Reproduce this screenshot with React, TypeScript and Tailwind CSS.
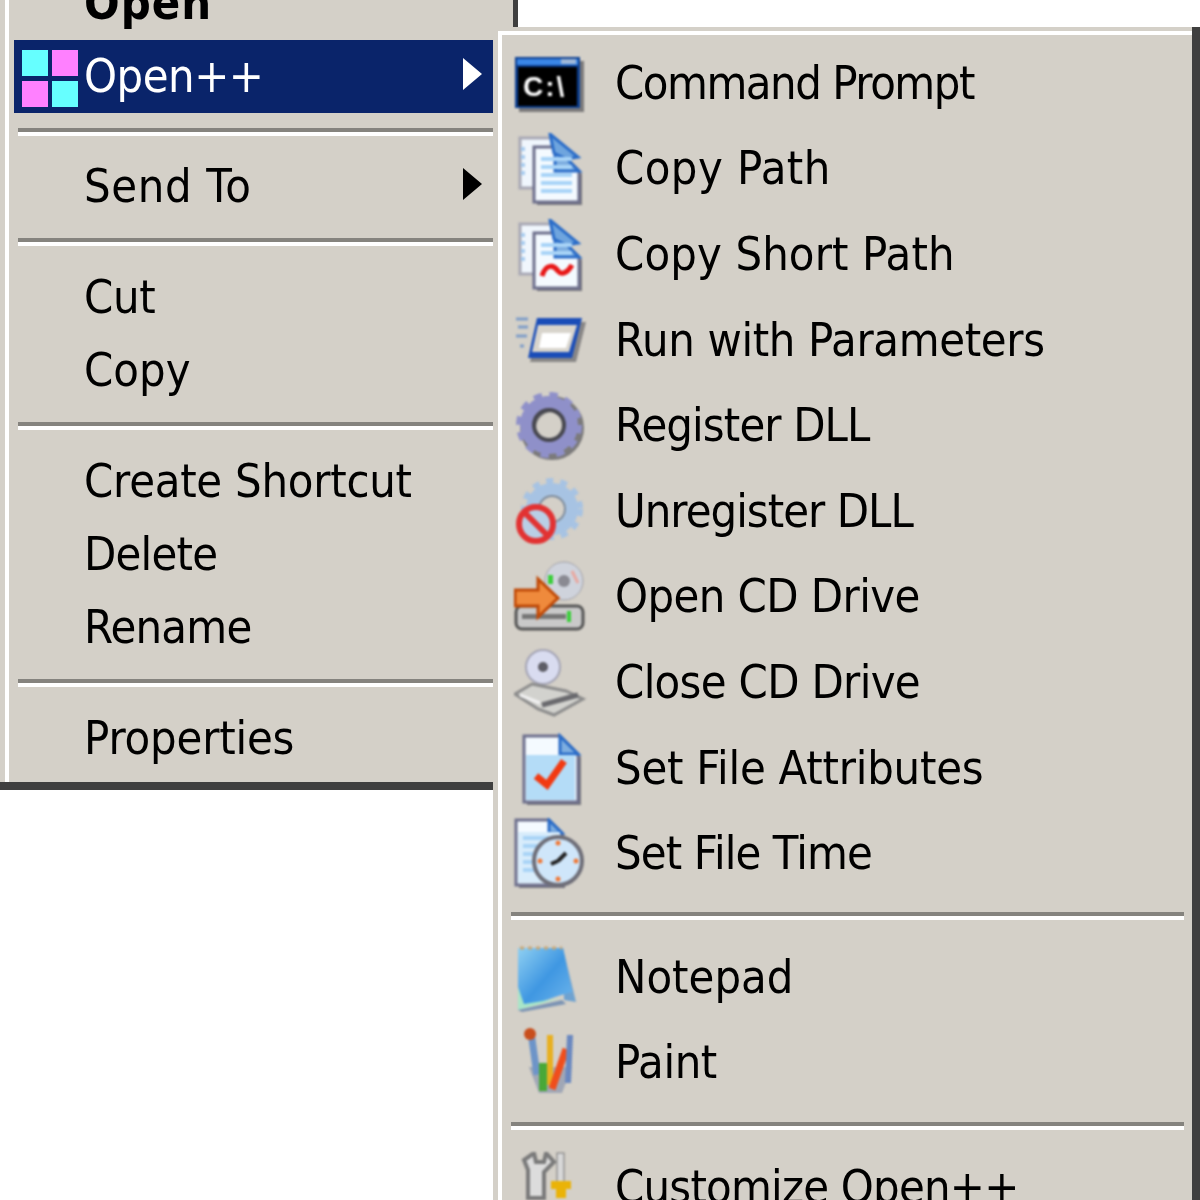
import React from 'react';

// Classic Windows 2000 shell context menu, blown up to about 4x
const GREY = 'bg-[#d4d0c8]';
const TEXT = 'inline-block scale-y-[1.1] blur-[0.7px] whitespace-nowrap';

const Arrow: React.FC<{ color: string }> = ({ color }) => (
  <svg width="19" height="32" viewBox="0 0 19 32" className="ml-auto mr-[11px] mb-[6px] blur-[0.7px]">
    <path d="M0 0L19 16L0 32Z" fill={color} />
  </svg>
);

const Sep: React.FC<{ h: string; cls: string }> = ({ h, cls }) => (
  <div className={`${h} ${cls} flex flex-col justify-center`}>
    <div className="h-[4px] bg-[#85837e] blur-[0.5px]" />
    <div className="h-[4px] bg-white blur-[0.5px]" />
  </div>
);

const LeftRow: React.FC<{ label: string; track: string; arrow?: boolean }> = ({ label, track, arrow }) => (
  <div className="h-[73px] flex items-center pl-[70px]">
    <span className={`${TEXT} ${track} text-black`}>{label}</span>
    {arrow && <Arrow color="#000" />}
  </div>
);

const DocShape: React.FC<{ x: number; y: number; w: number; h: number; fold?: number }> = ({ x, y, w, h, fold = 22 }) => (
  <g>
    <path d={`M${x + 3} ${y + 3}h${w - fold}l${fold} ${fold}v${h - fold}h${-w}z`} fill="#5a5a66" opacity="0.75" />
    <path d={`M${x} ${y}h${w - fold}l${fold} ${fold}v${h - fold}h${-w}z`} fill="#f4faff" stroke="#6d6f8c" strokeWidth="3" />
    <path d={`M${x + w - fold} ${y}l${fold} ${fold}h${-fold}z`} fill="#7eaee0" stroke="#2a6cc8" strokeWidth="3" />
  </g>
);

const Lines: React.FC<{ x: number; y: number; w: number; n: number }> = ({ x, y, w, n }) => (
  <g fill="#a9d4f7">
    {Array.from({ length: n }).map((_, i) => (
      <rect key={i} x={x} y={y + i * 8} width={w} height={4} />
    ))}
  </g>
);

const CmdIcon = () => (
  <>
    <rect x="5" y="13" width="65" height="51" fill="#55555a" opacity="0.7" />
    <rect x="1" y="9" width="65" height="51" fill="#0c3f90" />
    <rect x="3" y="11" width="61" height="6" fill="#3a86e6" />
    <rect x="47" y="11" width="15" height="5" fill="#9fb8d8" />
    <rect x="4" y="19" width="59" height="39" fill="#000" />
    <text x="9" y="48" fill="#fff" fontSize="28" fontWeight="700" letterSpacing="2" fontFamily="'Liberation Sans', sans-serif">C:\</text>
  </>
);

const CopyIcon: React.FC<{ squiggle?: boolean }> = ({ squiggle }) => (
  <>
    <rect x="6" y="5" width="32" height="50" fill="#f0f6fd" stroke="#a8a8b4" strokeWidth="3" />
    <path d="M9 14v32" stroke="#a9cdf0" strokeWidth="4" strokeDasharray="4 4" />
    <DocShape x={20} y={14} w={45} h={55} fold={24} />
    <path d="M36 1L64 24L52 26L40 20Z" fill="#6fa5de" stroke="#2a6cc8" strokeWidth="3" />
    <Lines x={27} y={24} w={31} n={squiggle ? 2 : 5} />
    {squiggle && (
      <path d="M28 57C32 44 40 46 44 52C48 57 54 53 58 46" fill="none" stroke="#e81818" strokeWidth="5" />
    )}
  </>
);

const RunIcon = () => (
  <>
    <path d="M26 17H72L62 57H16Z" fill="#55555a" opacity="0.6" />
    <path d="M23 13H68L58 53H14Z" fill="#1a4db8" />
    <path d="M24 20H63L55 47H18Z" fill="#d8d4cc" />
    <path d="M28 28H57L52 43H25Z" fill="#fff" />
    <path d="M2 14h12M4 22h10M2 31h11M6 41h4" stroke="#7f9dc8" strokeWidth="3" />
  </>
);

const GearIcon = () => (
  <>
    <circle cx="38" cy="38" r="24" fill="none" stroke="#55555a" strokeWidth="16" opacity="0.7" />
    <circle cx="35" cy="35" r="29" fill="none" stroke="#8f90c9" strokeWidth="8" strokeDasharray="8 7.2" />
    <circle cx="35" cy="35" r="22" fill="none" stroke="#8f90c9" strokeWidth="14" />
    <circle cx="35" cy="35" r="15" fill="none" stroke="#47474f" strokeWidth="4" />
  </>
);

const UnregIcon = () => (
  <>
    <circle cx="38" cy="33" r="28" fill="none" stroke="#a7c3e3" strokeWidth="6" strokeDasharray="7 7" />
    <circle cx="38" cy="33" r="20" fill="none" stroke="#a7c3e3" strokeWidth="12" />
    <circle cx="38" cy="33" r="13" fill="none" stroke="#7d8c9e" strokeWidth="2" />
    <circle cx="22" cy="48" r="17" fill="#b9cfe6" stroke="#e23232" strokeWidth="6" />
    <path d="M11 37L33 59" stroke="#e23232" strokeWidth="6" />
  </>
);

const OpenCdIcon = () => (
  <>
    <circle cx="50" cy="20" r="19" fill="#cfd3dc" stroke="#a0a0a8" strokeWidth="1" />
    <circle cx="50" cy="20" r="6" fill="#8a8a92" />
    <path d="M58 10L64 22" stroke="#e9a8a0" strokeWidth="3" />
    <rect x="2" y="45" width="67" height="23" rx="6" fill="#c9c9c9" stroke="#555" strokeWidth="3" />
    <rect x="8" y="53" width="44" height="5" fill="#777" />
    <rect x="34" y="14" width="5" height="9" fill="#3bcf3b" />
    <rect x="53" y="50" width="4" height="11" fill="#3bcf3b" />
    <path d="M1 29H24V18L44 37L24 56V45H1Z" fill="#ef8a3c" stroke="#c04a08" strokeWidth="3" />
  </>
);

const CloseCdIcon = () => (
  <>
    <circle cx="29" cy="20" r="17" fill="#d9dcf0" stroke="#a4a4b4" strokeWidth="2" />
    <circle cx="29" cy="20" r="5" fill="#5d5d66" />
    <path d="M1 47L18 37L52 44L69 52L40 68L24 62Z" fill="#d2d2ce" stroke="#8c8c8c" strokeWidth="3" />
    <path d="M28 58L64 48" stroke="#6a6a6e" strokeWidth="5" />
    <path d="M6 48L26 56" stroke="#f0f0f0" strokeWidth="3" />
  </>
);

const AttrIcon = () => (
  <>
    <DocShape x={10} y={3} w={54} h={66} fold={18} />
    <rect x="12" y="22" width="49" height="45" fill="#b4dcf7" />
    <path d="M22 43L33 52L50 28" fill="none" stroke="#f23a12" strokeWidth="7" />
  </>
);

const TimeIcon = () => (
  <>
    <DocShape x={2} y={2} w={46} h={65} fold={13} />
    <rect x="4" y="14" width="42" height="51" fill="#d8ecfb" />
    <Lines x={9} y={18} w={26} n={5} />
    <circle cx="44" cy="43" r="24" fill="#cfe6fa" stroke="#6e6e78" strokeWidth="4" />
    <path d="M44 43L52 35M44 43L37 46" stroke="#222" strokeWidth="4" />
    <g fill="#ef7a3a">
      <circle cx="44" cy="25" r="2.5" />
      <circle cx="44" cy="61" r="2.5" />
      <circle cx="26" cy="43" r="2.5" />
      <circle cx="62" cy="43" r="2.5" />
    </g>
  </>
);

const NotepadIcon = () => (
  <>
    <defs>
      <linearGradient id="pad" x1="0" y1="0" x2="1" y2="1">
        <stop offset="0" stopColor="#8fd0f2" />
        <stop offset="0.5" stopColor="#3f97e2" />
        <stop offset="1" stopColor="#73b8ec" />
      </linearGradient>
    </defs>
    <path d="M49 6L62 60L50 58Z" fill="#6fa2d0" />
    <path d="M4 6H49L58 50L44 54L4 68Z" fill="url(#pad)" />
    <path d="M4 45L10 62L48 56L4 68Z" fill="#a8e6c8" />
    <path d="M4 68L48 58L52 62L8 70Z" fill="#7c94b4" />
    <path d="M6 6h42" stroke="#c8a878" strokeWidth="3" strokeDasharray="4 4" />
  </>
);

const PaintIcon = () => (
  <>
    <path d="M15 40L25 66H48L58 40Z" fill="#8f9ab0" opacity="0.75" />
    <rect x="17" y="10" width="7" height="38" fill="#6d94c8" transform="rotate(-8 20 30)" />
    <circle cx="16" cy="7" r="6" fill="#c84e1c" />
    <rect x="33" y="8" width="6" height="50" fill="#e8b020" />
    <rect x="25" y="36" width="8" height="28" fill="#48a838" />
    <path d="M52 22L38 62" stroke="#f04e1c" strokeWidth="7" />
    <path d="M56 8L54 56" stroke="#6a88c0" strokeWidth="6" />
  </>
);

const ToolsIcon = () => (
  <>
    <path d="M14 46V18L10 8L20 1L22 10L30 10L32 1L40 10L30 20V46Z" fill="#dcdcdc" stroke="#7a7a7a" strokeWidth="4" />
    <rect x="43" y="1" width="7" height="29" fill="#d8d8d8" stroke="#777" strokeWidth="1" />
    <path d="M37 29H57V37H52V46H42V37H37Z" fill="#eab308" />
  </>
);

// tracking per label: the original hinted bitmap font does not scale evenly
const subItems: { label: string; track: string; icon: React.ReactNode }[] = [
  { label: 'Command Prompt', track: 'tracking-[-1.5px]', icon: <CmdIcon /> },
  { label: 'Copy Path', track: 'tracking-[0.4px]', icon: <CopyIcon /> },
  { label: 'Copy Short Path', track: 'tracking-[0.1px]', icon: <CopyIcon squiggle /> },
  { label: 'Run with Parameters', track: 'tracking-[-0.37px]', icon: <RunIcon /> },
  { label: 'Register DLL', track: 'tracking-[-0.9px]', icon: <GearIcon /> },
  { label: 'Unregister DLL', track: 'tracking-[-1px]', icon: <UnregIcon /> },
  { label: 'Open CD Drive', track: 'tracking-[-0.6px]', icon: <OpenCdIcon /> },
  { label: 'Close CD Drive', track: 'tracking-[-0.7px]', icon: <CloseCdIcon /> },
  { label: 'Set File Attributes', track: 'tracking-[-0.26px]', icon: <AttrIcon /> },
  { label: 'Set File Time', track: 'tracking-[-0.9px]', icon: <TimeIcon /> },
];

const SubRow: React.FC<{ label: string; track: string; icon: React.ReactNode }> = ({ label, track, icon }) => (
  <div className="h-[85.6px] flex items-center pl-[12px] shrink-0">
    <svg width="72" height="72" viewBox="0 0 72 72" className="shrink-0 blur-[1.3px]">
      {icon}
    </svg>
    <span className={`${TEXT} ${track} ml-[29px] text-black`}>{label}</span>
  </div>
);

const App: React.FC = () => {
  return (
    <div className="relative w-[1200px] h-[1200px] bg-white overflow-hidden font-['DejaVu_Sans',sans-serif] text-[42px] leading-none">
      {/* parent menu, its top is cut off by the picture */}
      <div className={`w-[518px] -mt-[33px] pl-[5px] border-r-[5px] border-b-[8px] border-[#3f3f3f] ${GREY}`}>
        <div className="border-l-[4px] border-white pl-[5px] pb-[7px]">
          <div className="w-[479px]">
            <div className="h-[73px] flex items-center pl-[70px]">
              <span className={`${TEXT} tracking-[1px] font-bold text-black`}>Open</span>
            </div>
            <div className="h-[73px] flex items-center bg-[#0a246a] text-white">
              <div className="w-[70px] pl-[8px] shrink-0 grid grid-cols-2 gap-x-[4px] gap-y-[5px] pr-[6px] pt-[3px] blur-[0.4px]">
                <div className="h-[26px] bg-[#66ffff]" />
                <div className="h-[26px] bg-[#ff80ff]" />
                <div className="h-[26px] bg-[#ff80ff]" />
                <div className="h-[26px] bg-[#66ffff]" />
              </div>
              <span className={`${TEXT} tracking-[-0.5px]`}>Open++</span>
              <Arrow color="#fff" />
            </div>
            <Sep h="h-[37px]" cls="ml-[4px]" />
            <LeftRow label="Send To" track="tracking-[0.6px]" arrow />
            <Sep h="h-[38px]" cls="ml-[4px]" />
            <LeftRow label="Cut" track="tracking-[-0.3px]" />
            <LeftRow label="Copy" track="tracking-[0px]" />
            <Sep h="h-[38px]" cls="ml-[4px]" />
            <LeftRow label="Create Shortcut" track="tracking-[-0.27px]" />
            <LeftRow label="Delete" track="tracking-[-0.8px]" />
            <LeftRow label="Rename" track="tracking-[-0.8px]" />
            <Sep h="h-[38px]" cls="ml-[4px]" />
            <LeftRow label="Properties" track="tracking-[-0.2px]" />
          </div>
        </div>
      </div>

      {/* Open++ submenu lying over the parent */}
      <div className={`absolute left-[493px] top-[27px] w-[707px] h-[1200px] pl-[5px] pt-[4px] border-r-[8px] border-[#3f3f3f] ${GREY}`}>
        <div className="h-full border-l-[4px] border-t-[4px] border-white pr-[2px] flex flex-col overflow-hidden">
          <div className="pt-[6px]">
            {subItems.map((s) => (
              <SubRow key={s.label} label={s.label} track={s.track} icon={s.icon} />
            ))}
          </div>
          <Sep h="h-[38px]" cls="ml-[9px] mr-[6px] shrink-0" />
          <SubRow label="Notepad" track="tracking-[0px]" icon={<NotepadIcon />} />
          <SubRow label="Paint" track="tracking-[-0.4px]" icon={<PaintIcon />} />
          <Sep h="h-[39px]" cls="ml-[9px] mr-[6px] shrink-0" />
          <SubRow label="Customize Open++" track="tracking-[-0.8px]" icon={<ToolsIcon />} />
        </div>
      </div>
    </div>
  );
};

export default App;
